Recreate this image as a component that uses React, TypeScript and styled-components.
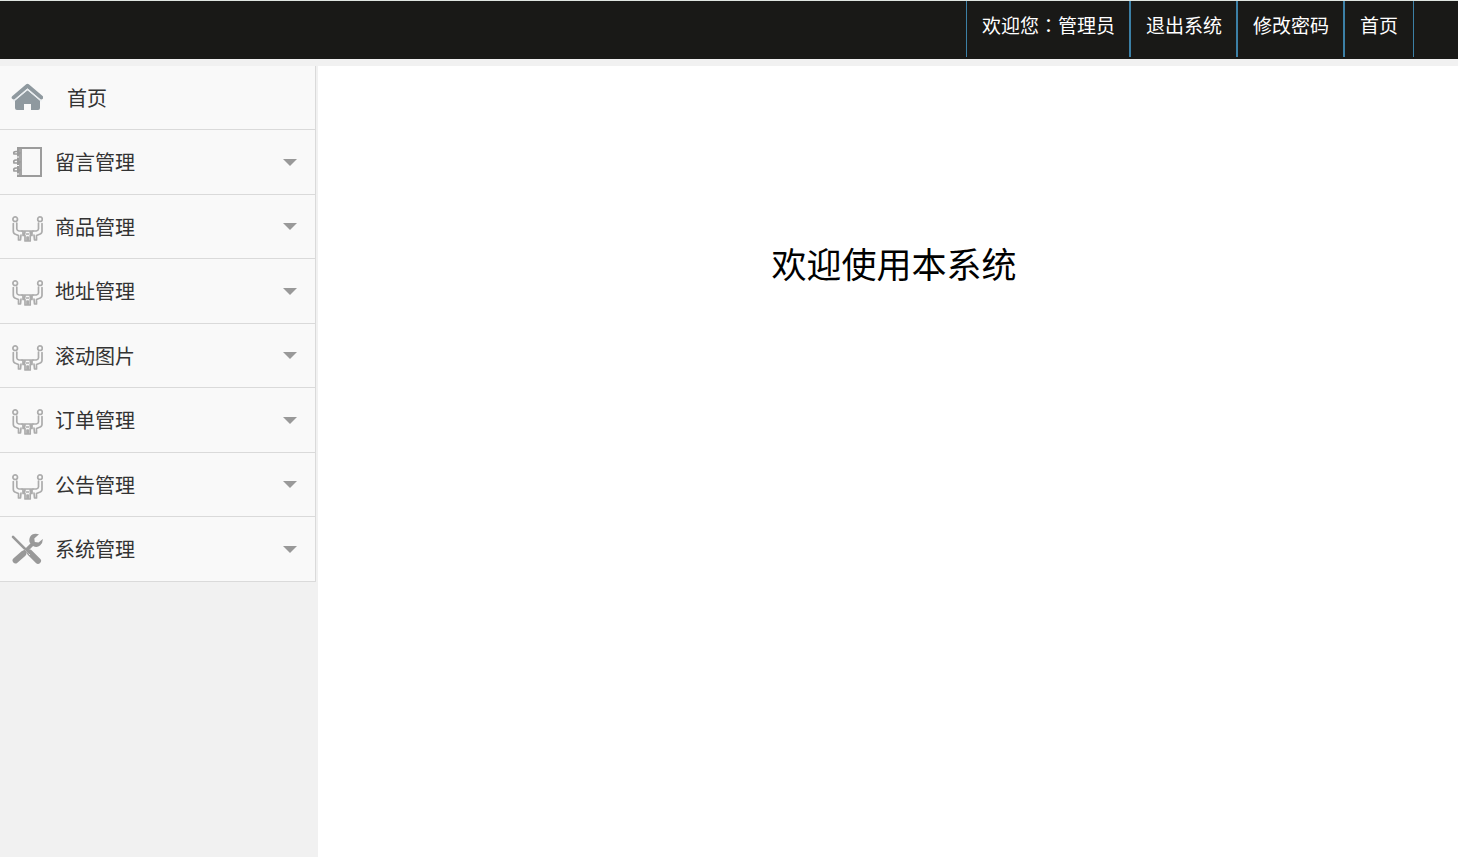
import React from "react";
import styled, { createGlobalStyle } from "styled-components";

const GlobalStyle = createGlobalStyle`
  * { box-sizing: border-box; }
  html, body, #root { height: 100%; }
  body {
    margin: 0;
    background: #f1f1f1;
    font-family: "Noto Sans CJK SC", "Liberation Sans", sans-serif;
    color: #333;
  }
`;

const Page = styled.div`
  display: flex;
  flex-direction: column;
  min-height: 100%;
`;

const Header = styled.header`
  display: flex;
  justify-content: flex-end;
  height: 59px;
  padding: 0 44px 2px 0;
  background: #191917;
  border-top: 1px solid #dfe5e0;
`;

const TopNav = styled.nav`
  display: flex;
`;

const topItem = `
  padding: 0 14px 0 15px;
  border: solid #3c80a6;
  border-width: 0 1px;
  font-size: 19px;
  line-height: 48px;
  color: #fff;
  white-space: nowrap;
`;

const Greeting = styled.span`
  ${topItem}
`;

const Colon = styled.span`
  font-family: "Noto Sans CJK TC", sans-serif;
`;

const TopLink = styled.a`
  ${topItem}
  text-decoration: none;
  &:last-child { padding-right: 15px; }
`;

const Body = styled.div`
  display: flex;
  flex: 1;
  padding-top: 7px;
`;

const Sidebar = styled.aside`
  flex: 0 0 318px;
  padding-right: 2px;
`;

const Menu = styled.ul`
  margin: 0;
  padding: 0;
  list-style: none;
  background: #f9f9f9;
  border-right: 1px solid #dadada;
`;

const MenuItem = styled.li`
  height: 64px;
  border-bottom: 1px solid #dadada;
  &:nth-child(even) { height: 65px; }
`;

const rowStyle = `
  display: flex;
  align-items: center;
  width: 100%;
  height: 100%;
  padding: 0 18px 0 11px;
  border: 0;
  background: transparent;
  font-family: inherit;
  font-size: 20px;
  line-height: 30px;
  color: #333;
  text-align: left;
  text-decoration: none;
  cursor: pointer;
`;

const HomeLink = styled.a`
  ${rowStyle}
  gap: 24px;
`;

const MenuButton = styled.button`
  ${rowStyle}
  gap: 12px;
`;

const Label = styled.span`
  flex: 1;
`;

const Icon = styled.svg`
  flex: none;
  width: 32px;
  height: 32px;
`;

const Caret = styled.span`
  border: solid transparent;
  border-width: 7px 7px 0;
  border-top-color: #999;
`;

const Main = styled.main`
  flex: 1;
  padding: 171px 0 0 12px;
  background: #fff;
`;

const Welcome = styled.h1`
  margin: 0;
  font-size: 35px;
  line-height: 52px;
  font-weight: 400;
  color: #000;
  text-align: center;
`;

type IconName = "notebook" | "people" | "tools";

const HomeIcon = () => (
  <Icon viewBox="0 0 32 32" aria-hidden="true">
    <path d="M2.7 15.5 16.5 3.8 30.3 15.5" fill="none" stroke="#8f999f" strokeWidth="4" strokeLinecap="round" strokeLinejoin="round" />
    <path d="M4 18.5 16.5 8.3 29 18.5V26Q29 28 27 28H20V22H13V28H6Q4 28 4 26Z" fill="#8f999f" />
    <path d="M2.5 19.3 16.5 7.4 30.5 19.3" fill="none" stroke="#e9edf0" strokeWidth="1.2" />
  </Icon>
);

const NotebookIcon = () => (
  <Icon viewBox="0 0 32 32" fill="none" stroke="#9c9c9c" aria-hidden="true">
    <rect x="6" y="2" width="5" height="29" fill="#a6a6a6" stroke="none" />
    <rect x="7" y="2" width="23" height="28" strokeWidth="2" />
    <path d="M8 5.5H5Q2 5.5 3 8H7Q9 8 9 6M8 14H5Q2 14 3 17H7Q9 17 9 15M8 22H5Q2 22 3 25H7Q9 25 9 23" strokeWidth="1.7" />
    <path d="M4 11H8M4 19.5H8M4 28H8" stroke="#f9f9f9" strokeWidth="1.2" />
  </Icon>
);

const PeopleIcon = () => (
  <Icon viewBox="0 0 32 32" fill="none" stroke="#acacac" strokeWidth="1.7" strokeLinecap="round" strokeLinejoin="round" aria-hidden="true">
    <circle cx="4.2" cy="8.2" r="2.3" />
    <circle cx="29" cy="8.2" r="2.3" />
    <path d="M2.3 12.5V20.5Q2.5 23 5 23.5L7.5 24.500V29H9.500L10 24M5.8 12V18Q6 19.500 8 20H11" />
    <path d="M31 12.500V20.500Q30.700 23 28 23.500L25.500 24.500V29H23.500L23 24M27.500 12V18Q27.300 19.500 25.300 20H22" />
    <path d="M11 20H22M12 20V24.500M21 20V24.500M14 21 13 24.500H14V30H16V26H17.200V30H19.200V24.500H20.200L19.200 21M15.500 23H17.700" />
  </Icon>
);

const ToolsIcon = () => (
  <Icon viewBox="0 0 32 32" fill="none" stroke="#999" strokeLinecap="round" aria-hidden="true">
    <path d="m2 3.800 15 15" strokeWidth="2.6" />
    <path d="m19 19.800 8 8" strokeWidth="6" />
    <path d="M12.500 20.500 4.500 27.500" strokeWidth="5.8" />
    <path d="m14 18.500 7-7" strokeWidth="3.8" />
    <path d="M28 1.300Q21.500-.5 19 4Q17.500 7.500 19 10L22 13Q26 15 29 12.500Q32 10 31.800 6L27.500 9.500L23.800 9L23.300 5.500Z" fill="#999" stroke="none" />
    <path d="m13.500 16.500 5 5" stroke="#f9f9f9" strokeWidth="1" />
    <path d="m14 15.800 4 4" strokeWidth="2.2" />
  </Icon>
);

const icons: Record<IconName, React.FC> = {
  notebook: NotebookIcon,
  people: PeopleIcon,
  tools: ToolsIcon,
};

const sections: { label: string; icon: IconName }[] = [
  { label: "留言管理", icon: "notebook" },
  { label: "商品管理", icon: "people" },
  { label: "地址管理", icon: "people" },
  { label: "滚动图片", icon: "people" },
  { label: "订单管理", icon: "people" },
  { label: "公告管理", icon: "people" },
  { label: "系统管理", icon: "tools" },
];

export default function App() {
  return (
    <Page lang="zh-CN">
      <GlobalStyle />
      <Header>
        <TopNav>
          <Greeting>欢迎您<Colon lang="zh-TW">：</Colon>管理员</Greeting>
          <TopLink href="#logout">退出系统</TopLink>
          <TopLink href="#password">修改密码</TopLink>
          <TopLink href="#home">首页</TopLink>
        </TopNav>
      </Header>
      <Body>
        <Sidebar>
          <Menu>
            <MenuItem>
              <HomeLink href="#home">
                <HomeIcon />
                <Label>首页</Label>
              </HomeLink>
            </MenuItem>
            {sections.map(({ label, icon }) => {
              const SectionIcon = icons[icon];
              return (
                <MenuItem key={label}>
                  <MenuButton type="button" aria-expanded={false}>
                    <SectionIcon />
                    <Label>{label}</Label>
                    <Caret />
                  </MenuButton>
                </MenuItem>
              );
            })}
          </Menu>
        </Sidebar>
        <Main>
          <Welcome>欢迎使用本系统</Welcome>
        </Main>
      </Body>
    </Page>
  );
}
